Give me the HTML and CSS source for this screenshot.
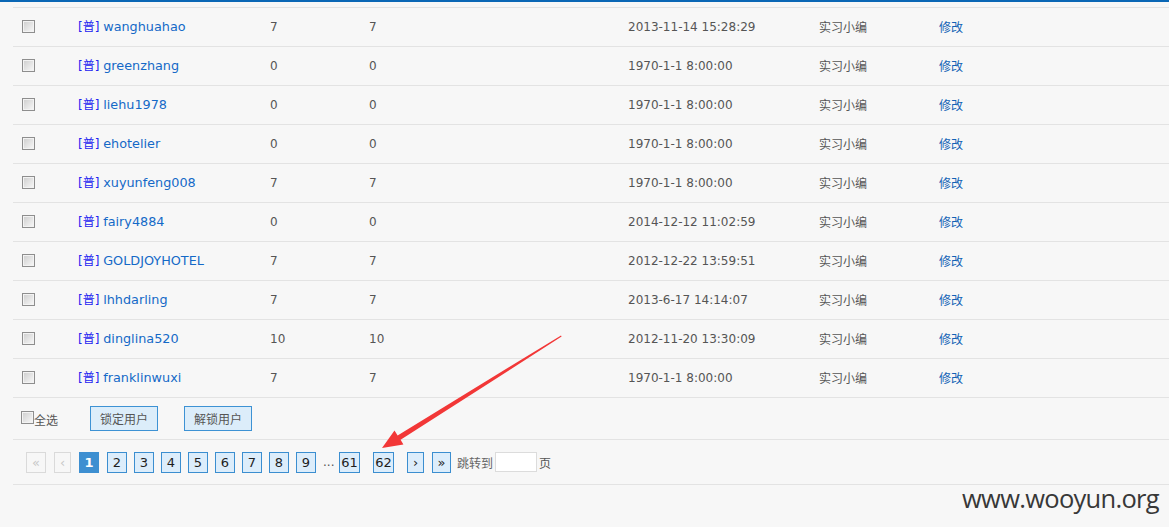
FILE: index.html
```html
<!DOCTYPE html>
<html lang="zh-CN">
<head>
<meta charset="utf-8">
<title>用户列表</title>
<link rel="stylesheet" href="styles.css">
</head>
<body>
<div class="topbar"></div>
<div class="page">
  <div class="list">
    <div class="row"><span class="cb"></span><span class="user"><span class="tag">[普]</span> <a>wanghuahao</a></span><span>7</span><span>7</span><span>2013-11-14 15:28:29</span><span class="cn">实习小编</span><a class="edit">修改</a></div>
    <div class="row"><span class="cb"></span><span class="user"><span class="tag">[普]</span> <a>greenzhang</a></span><span>0</span><span>0</span><span>1970-1-1 8:00:00</span><span class="cn">实习小编</span><a class="edit">修改</a></div>
    <div class="row"><span class="cb"></span><span class="user"><span class="tag">[普]</span> <a>liehu1978</a></span><span>0</span><span>0</span><span>1970-1-1 8:00:00</span><span class="cn">实习小编</span><a class="edit">修改</a></div>
    <div class="row"><span class="cb"></span><span class="user"><span class="tag">[普]</span> <a>ehotelier</a></span><span>0</span><span>0</span><span>1970-1-1 8:00:00</span><span class="cn">实习小编</span><a class="edit">修改</a></div>
    <div class="row"><span class="cb"></span><span class="user"><span class="tag">[普]</span> <a>xuyunfeng008</a></span><span>7</span><span>7</span><span>1970-1-1 8:00:00</span><span class="cn">实习小编</span><a class="edit">修改</a></div>
    <div class="row"><span class="cb"></span><span class="user"><span class="tag">[普]</span> <a>fairy4884</a></span><span>0</span><span>0</span><span>2014-12-12 11:02:59</span><span class="cn">实习小编</span><a class="edit">修改</a></div>
    <div class="row"><span class="cb"></span><span class="user"><span class="tag">[普]</span> <a>GOLDJOYHOTEL</a></span><span>7</span><span>7</span><span>2012-12-22 13:59:51</span><span class="cn">实习小编</span><a class="edit">修改</a></div>
    <div class="row"><span class="cb"></span><span class="user"><span class="tag">[普]</span> <a>lhhdarling</a></span><span>7</span><span>7</span><span>2013-6-17 14:14:07</span><span class="cn">实习小编</span><a class="edit">修改</a></div>
    <div class="row"><span class="cb"></span><span class="user"><span class="tag">[普]</span> <a>dinglina520</a></span><span>10</span><span>10</span><span>2012-11-20 13:30:09</span><span class="cn">实习小编</span><a class="edit">修改</a></div>
    <div class="row"><span class="cb"></span><span class="user"><span class="tag">[普]</span> <a>franklinwuxi</a></span><span>7</span><span>7</span><span>1970-1-1 8:00:00</span><span class="cn">实习小编</span><a class="edit">修改</a></div>
  </div>
  <div class="toolbar">
    <label class="all"><span class="cb"></span><span class="cn">全选</span></label>
    <button class="btn">锁定用户</button>
    <button class="btn">解锁用户</button>
  </div>
  <div class="pager">
    <span class="pg dis">«</span>
    <span class="pg dis prev">‹</span>
    <span class="pg cur">1</span>
    <span class="pg">2</span>
    <span class="pg">3</span>
    <span class="pg">4</span>
    <span class="pg">5</span>
    <span class="pg">6</span>
    <span class="pg">7</span>
    <span class="pg">8</span>
    <span class="pg">9</span>
    <span class="dots">...</span>
    <span class="pg wide">61</span>
    <span class="pg wide far">62</span>
    <span class="pg arr far">›</span>
    <span class="pg last">»</span>
    <span class="jump cn">跳转到</span>
    <span class="inp"></span>
    <span class="cn ye">页</span>
  </div>
</div>
<svg class="arrow" width="1169" height="527" viewBox="0 0 1169 527">
  <polygon points="382,448 394.5,430.5 397.6,435.4 561,335.4 561.6,336.6 400.6,439.8 403.4,444.4" fill="#f23737"/>
</svg>
<div class="mark">www.wooyun.org</div>
</body>
</html>
```

FILE: styles.css
```css
html, body {
  margin: 0;
  padding: 0;
}
body {
  background: #f7f7f7;
  font-family: "DejaVu Sans", "Noto Sans CJK SC", sans-serif;
  font-size: 12px;
  color: #555;
  width: 1169px;
  height: 527px;
  overflow: hidden;
  position: relative;
}
.topbar {
  height: 2px;
  background: #0a67b5;
}
.page {
  margin: 5px 0 0 13px;
}
.cn {
  font-family: "Noto Sans CJK SC", sans-serif;
}
.row {
  display: grid;
  grid-template-columns: 56px 192px 99px 259px 191px 120px 1fr;
  align-items: center;
  height: 37px;
  padding: 0 0 1px 9px;
  border-top: 1px solid #e3e3e3;
  line-height: 14px;
}
.cb {
  display: inline-block;
  width: 11px;
  height: 11px;
  border: 1px solid #8e8e8e;
  box-shadow: inset 0 0 0 1px #f3f3f3;
  background: linear-gradient(135deg, #cdcdcd, #f9f9f9);
}
.user {
  line-height: 14px;
  white-space: nowrap;
}
.user a {
  color: #1469c7;
  font-size: 12.8px;
}
.tag {
  color: #2323f0;
}
.row .cn {
  line-height: 14px;
}
.edit {
  color: #1262b5;
  font-family: "Noto Sans CJK SC", sans-serif;
  line-height: 14px;
}
.toolbar {
  display: flex;
  align-items: center;
  height: 41px;
  border-top: 1px solid #e3e3e3;
  padding-left: 8px;
}
.all {
  display: flex;
  align-items: flex-end;
  width: 69px;
  padding-top: 2px;
}
.all .cb {
  margin-bottom: 4px;
}
.all .cn {
  line-height: 16px;
  font-size: 12px;
}
.btn {
  width: 68px;
  height: 25px;
  margin: 0 26px 0 0;
  padding: 0;
  border: 1px solid #3d92d4;
  background: #dcedfa;
  color: #555;
  font-family: "Noto Sans CJK SC", sans-serif;
  font-size: 12px;
}
.pager {
  display: flex;
  align-items: center;
  gap: 7px;
  height: 44px;
  border-top: 1px solid #e3e3e3;
  border-bottom: 1px solid #e3e3e3;
  padding: 0 0 0 13px;
}
.pg {
  box-sizing: border-box;
  width: 20px;
  height: 21px;
  border: 1px solid #3b8ed0;
  background: #dcedfb;
  color: #1e1e1e;
  font-size: 13px;
  line-height: 19px;
  text-align: center;
  margin-top: 1px;
}
.pg.dis {
  border-color: #dadada;
  background: transparent;
  color: #c8c8c8;
}
.pg.prev {
  width: 17px;
  margin-left: 1px;
  margin-right: 1px;
}
.pg.cur {
  background: #3d8fd1;
  border-color: #3d8fd1;
  color: #fff;
  font-weight: bold;
  margin-right: 1px;
}
.pg.wide {
  width: 21px;
}
.pg.far {
  margin-left: 6px;
}
.pg.arr {
  width: 17px;
}
.pg.last {
  width: 19px;
  margin-left: 1px;
}
.dots {
  color: #555;
  font-size: 12px;
  width: 9px;
}
.jump {
  color: #666;
  margin-left: -1px;
  margin-right: -5px;
}
.inp {
  box-sizing: border-box;
  width: 42px;
  height: 20px;
  background: #fff;
  border: 1px solid #dcdcdc;
  margin-right: -5px;
}
.ye {
  color: #555;
}
.arrow {
  position: absolute;
  left: 0;
  top: 0;
  pointer-events: none;
}
.mark {
  position: absolute;
  right: 10px;
  top: 481px;
  font-family: "Open Sans", sans-serif;
  font-size: 25.5px;
  letter-spacing: -0.7px;
  color: #383838;
}
```
